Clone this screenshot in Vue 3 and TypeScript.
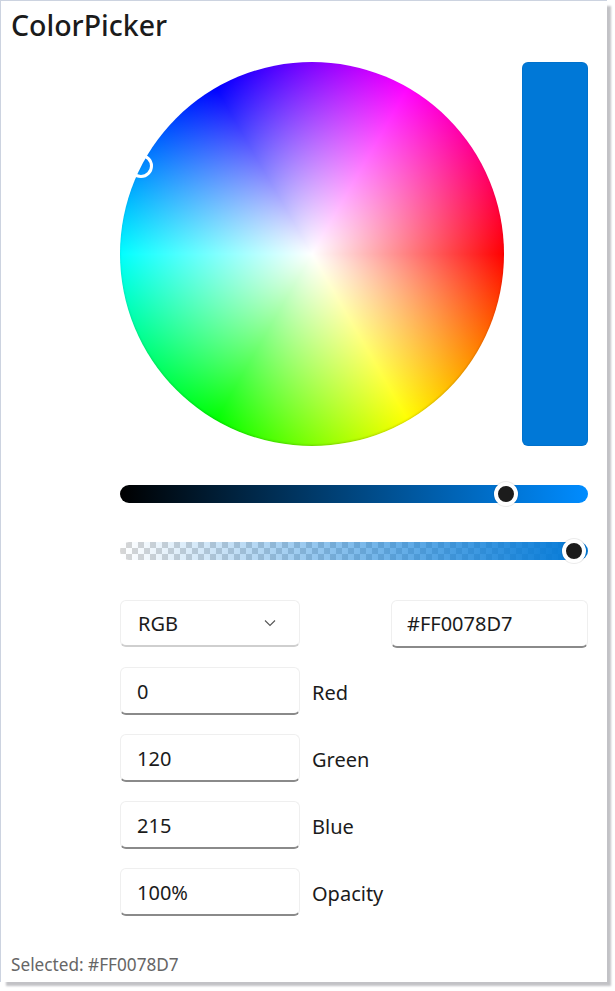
<script setup lang="ts">
const hex = '#FF0078D7'
const channels = [
  { value: '0', label: 'Red' },
  { value: '120', label: 'Green' },
  { value: '215', label: 'Blue' },
  { value: '100%', label: 'Opacity' },
]
</script>

<template>
  <div class="page">
    <div class="window">
      <h1 class="title">ColorPicker</h1>
      <div class="picker">
        <div class="top">
          <div class="wheel">
            <span class="wheel-mark"></span>
          </div>
          <div class="swatch"></div>
        </div>
        <div class="slider value-slider">
          <span class="thumb value-thumb"></span>
        </div>
        <div class="slider alpha-slider">
          <span class="thumb alpha-thumb"></span>
        </div>
        <div class="controls">
          <div class="row first-row">
            <div class="field select">
              <span>RGB</span>
              <svg class="chevron" width="12" height="12" viewBox="0 0 12 12">
                <path d="M1 3.5 L6 8.5 L11 3.5" fill="none" stroke="#555" stroke-width="1.1" />
              </svg>
            </div>
            <div class="field hex">{{ hex }}</div>
          </div>
          <div v-for="c in channels" :key="c.label" class="row">
            <div class="field channel">{{ c.value }}</div>
            <span class="label">{{ c.label }}</span>
          </div>
        </div>
      </div>
      <div class="selected">Selected: {{ hex }}</div>
    </div>
  </div>
</template>

<style>
html, body { background: #fff; }
</style>

<style scoped>
.page {
  width: 615px;
  height: 991px;
  overflow: hidden;
}
.window {
  box-sizing: border-box;
  width: 607px;
  height: 982px;
  background: #fff;
  border-left: 1px solid #ccd3e0;
  border-top: 1px solid #ccd3e0;
  box-shadow: 5px 5px 2px -1px #c2c2c6;
  font-family: "Noto Sans", "Open Sans", sans-serif;
  color: #1b1b1b;
  display: flex;
  flex-direction: column;
  position: relative;
}
.title {
  margin: 5px 0 0 10px;
  font-size: 28.5px;
  line-height: 39px;
  font-weight: 500;
}
.picker {
  margin: 17px 0 0 119px;
  width: 468px;
}
.top {
  display: flex;
  justify-content: space-between;
}
.wheel {
  position: relative;
  width: 384px;
  height: 384px;
  border-radius: 50%;
  background:
    radial-gradient(circle closest-side, #fff 0%, rgba(255, 255, 255, 0) 100%),
    conic-gradient(from 90deg, #f00, #ff0, #0f0, #0ff, #00f, #f0f, #f00);
  box-shadow: inset 0 -1px 2px rgba(0, 0, 0, 0.18);
}
.wheel-mark {
  position: absolute;
  left: 9px;
  top: 92px;
  width: 24px;
  height: 24px;
  box-sizing: border-box;
  border: 3px solid #fff;
  border-radius: 50%;
}
.swatch {
  width: 66px;
  height: 384px;
  border-radius: 6px;
  background: #0078d7;
  box-shadow: inset 0 0 0 1px rgba(0, 0, 0, 0.05);
}
.slider {
  position: relative;
  height: 18px;
  border-radius: 9px;
}
.value-slider {
  margin-top: 39px;
  background: linear-gradient(to right, #000, #008cff);
}
.alpha-slider {
  margin-top: 39px;
  background:
    linear-gradient(to right, rgba(0, 120, 215, 0), #0078d7),
    repeating-conic-gradient(#d6d6d6 0 25%, #ffffff 0 50%) 0 0 / 12px 12px;
}
.thumb {
  position: absolute;
  top: -3px;
  width: 24px;
  height: 24px;
  box-sizing: border-box;
  border-radius: 50%;
  background: #1c1c1c;
  border: 4.5px solid #fff;
  box-shadow: 0 0 0 1px rgba(0, 0, 0, 0.08);
}
.value-thumb { left: 374px; }
.alpha-thumb { left: 442px; }
.controls {
  margin-top: 40px;
  display: flex;
  flex-direction: column;
  gap: 19px;
}
.row {
  display: flex;
  align-items: center;
  gap: 12px;
  height: 48px;
}
.first-row {
  justify-content: space-between;
}
.field {
  box-sizing: border-box;
  height: 48px;
  display: flex;
  align-items: center;
  font-size: 20px;
  background: #fff;
  border: 1.5px solid #efefef;
  border-bottom: 2px solid #8a8a8a;
  border-radius: 6px;
  padding-left: 15px;
  color: #1b1b1b;
}
.select {
  width: 180px;
  height: 47px;
  align-self: flex-start;
  justify-content: space-between;
  padding: 0 23px 0 17px;
  border-bottom-color: #cfcfcf;
}
.hex {
  width: 197px;
}
.channel {
  width: 180px;
  padding-left: 16px;
  padding-top: 1px;
}
.label {
  font-size: 20px;
  margin-top: 2px;
}
.selected {
  position: absolute;
  left: 10px;
  top: 952px;
  font-size: 17.2px;
  line-height: 24px;
  color: #666;
}
</style>
